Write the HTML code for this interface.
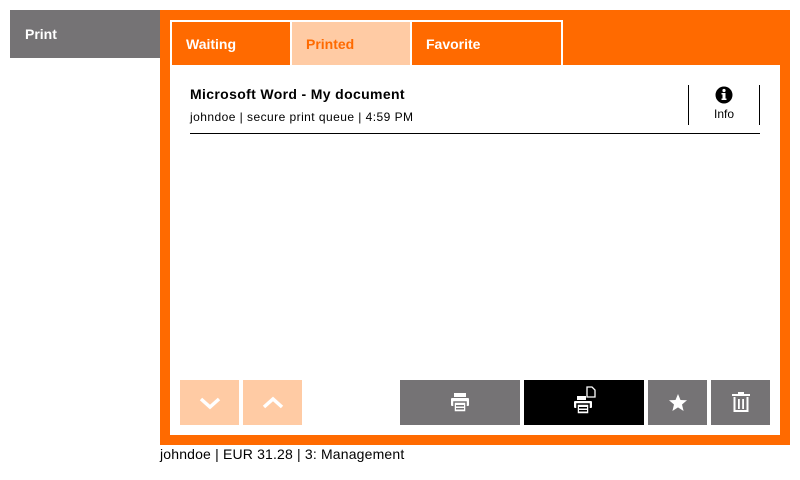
<!DOCTYPE html>
<html><head><style>
body{margin:0;width:800px;height:480px;background:#fff;font-family:"Liberation Sans",sans-serif;position:relative;overflow:hidden}
div{position:absolute;box-sizing:border-box}
.tab{top:22px;height:43px;font-weight:bold;font-size:14px;line-height:45px;padding-left:14px;color:#fff;background:#ff6a00}
.btn{top:380px;height:45px;background:#757375}
svg{position:absolute}
</style></head><body>
<div style="left:10px;top:10px;width:150px;height:48px;background:#757375;color:#fff;font-weight:bold;font-size:14px;padding:16px 0 0 15px">Print</div>
<div style="left:160px;top:10px;width:630px;height:435px;background:#ff6a00"></div>
<div style="left:170px;top:20px;width:610px;height:415px;background:#fff"></div>
<div style="left:563px;top:20px;width:217px;height:45px;background:#ff6a00"></div>
<div class="tab" style="left:172px;width:118px">Waiting</div>
<div class="tab" style="left:292px;width:118px;background:#ffcba4;color:#ff6a00">Printed</div>
<div class="tab" style="left:412px;width:149px">Favorite</div>
<div style="left:190px;top:86px;font-weight:bold;font-size:14px;color:#000;letter-spacing:0.35px">Microsoft Word - My document</div>
<div style="left:190px;top:110px;font-size:12px;color:#000;letter-spacing:0.45px">johndoe | secure print queue | 4:59 PM</div>
<div style="left:190px;top:133px;width:570px;height:1px;background:#000"></div>
<div style="left:688px;top:85px;width:1px;height:40px;background:#000"></div>
<div style="left:759px;top:85px;width:1px;height:40px;background:#000"></div>
<svg style="left:715px;top:86px" width="18" height="18" viewBox="0 0 18 18"><circle cx="9" cy="9" r="8.5" fill="#000"/><rect x="7.5" y="7" width="3" height="7" fill="#fff"/><rect x="6.5" y="12.5" width="5" height="1.5" fill="#fff"/><rect x="6.5" y="7" width="2" height="1.5" fill="#fff"/><circle cx="9" cy="4.5" r="1.6" fill="#fff"/></svg>
<div style="left:689px;top:107px;width:70px;text-align:center;font-size:12px">Info</div>
<div class="btn" style="left:180px;width:59px;background:#ffcba4"><svg style="left:18px;top:16px" width="24" height="14"><polyline points="3,3 12,11 21,3" fill="none" stroke="#fff" stroke-width="3.5"/></svg></div>
<div class="btn" style="left:243px;width:59px;background:#ffcba4"><svg style="left:18px;top:16px" width="24" height="14"><polyline points="3,11 12,3 21,11" fill="none" stroke="#fff" stroke-width="3.5"/></svg></div>
<div class="btn" style="left:400px;width:120px"><svg style="left:50px;top:12px" width="20" height="21" viewBox="0 0 20 21"><rect x="4" y="1" width="12" height="4" fill="#fff"/><rect x="1" y="6" width="18" height="8" rx="1" fill="#fff"/><rect x="4" y="10" width="12" height="10" fill="#fff" stroke="#757375" stroke-width="1.5"/><rect x="6" y="13" width="8" height="1.5" fill="#757375"/><rect x="6" y="16" width="8" height="1.5" fill="#757375"/></svg></div>
<div class="btn" style="left:524px;width:120px;background:#000"><svg style="left:48px;top:5px" width="26" height="30" viewBox="0 0 26 30"><path d="M15 2h5l3 3v7h-8z" fill="none" stroke="#fff" stroke-width="1.3"/><rect x="5" y="11" width="9" height="4" fill="#fff"/><rect x="2" y="16" width="18" height="7" rx="1" fill="#fff"/><rect x="5" y="19" width="12" height="10" fill="#fff" stroke="#000" stroke-width="1.5"/><rect x="7" y="22" width="8" height="1.5" fill="#000"/><rect x="7" y="25" width="8" height="1.5" fill="#000"/></svg></div>
<div class="btn" style="left:648px;width:59px"><svg style="left:20px;top:13px" width="20" height="20" viewBox="0 0 20 20"><polygon points="10,1 12.5,7 19,7.3 14,11.5 15.6,18 10,14.4 4.4,18 6,11.5 1,7.3 7.5,7" fill="#fff"/></svg></div>
<div class="btn" style="left:711px;width:59px"><svg style="left:20px;top:11px" width="20" height="22" viewBox="0 0 20 22"><rect x="1" y="3" width="18" height="2" fill="#fff"/><rect x="7" y="1" width="6" height="2" fill="#fff"/><path d="M3.5 6v14h13V6" fill="none" stroke="#fff" stroke-width="2"/><rect x="7" y="8" width="1.8" height="10" fill="#fff"/><rect x="11.2" y="8" width="1.8" height="10" fill="#fff"/></svg></div>
<div style="left:160px;top:446px;font-size:14px;color:#000;letter-spacing:0.17px">johndoe | EUR 31.28 | 3: Management</div>
</body></html>
